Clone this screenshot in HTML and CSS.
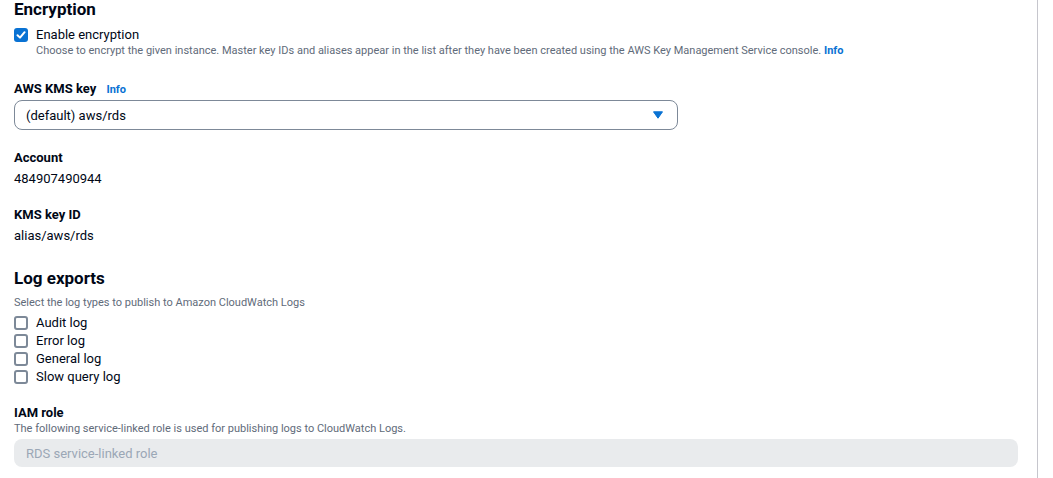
FILE: index.html
```html
<!DOCTYPE html>
<html lang="en">
<head>
<meta charset="utf-8">
<title>Encryption</title>
<link rel="stylesheet" href="styles.css">
</head>
<body>
<div class="page">
  <main class="panel">
    <h2 class="heading heading-first">Encryption</h2>
    <label class="check-row">
      <span class="box box-checked">
        <svg viewBox="0 0 14 14" width="14" height="14"><path d="M3.5 7.2 L6 9.6 L10.6 4.2" fill="none" stroke="#fff" stroke-width="2" stroke-linecap="round" stroke-linejoin="round"/></svg>
      </span>
      <span class="check-label">Enable encryption</span>
    </label>
    <p class="desc desc-indent">Choose to encrypt the given instance. Master key IDs and aliases appear in the list after they have been created using the AWS Key Management Service console. <a class="info">Info</a></p>

    <div class="field field-kms">
      <div class="label">AWS KMS key <a class="info info-label">Info</a></div>
      <div class="select">
        <span>(default) aws/rds</span>
        <svg class="caret" viewBox="0 0 10 8" width="10" height="8"><path d="M0.5 0.8 H9.5 L5 7.2 Z" fill="#0972d3" stroke="#0972d3" stroke-width="1" stroke-linejoin="round"/></svg>
      </div>
    </div>

    <div class="field field-account">
      <div class="label">Account</div>
      <div class="value">484907490944</div>
    </div>

    <div class="field field-keyid">
      <div class="label">KMS key ID</div>
      <div class="value">alias/aws/rds</div>
    </div>

    <h2 class="heading heading-log">Log exports</h2>
    <p class="desc desc-log">Select the log types to publish to Amazon CloudWatch Logs</p>
    <div class="check-list">
      <label class="check-row check-small"><span class="box"></span><span class="check-label">Audit log</span></label>
      <label class="check-row check-small"><span class="box"></span><span class="check-label">Error log</span></label>
      <label class="check-row check-small"><span class="box"></span><span class="check-label">General log</span></label>
      <label class="check-row check-small"><span class="box"></span><span class="check-label">Slow query log</span></label>
    </div>

    <div class="field field-iam">
      <div class="label label-tight">IAM role</div>
      <p class="desc">The following service-linked role is used for publishing logs to CloudWatch Logs.</p>
      <div class="input-disabled">RDS service-linked role</div>
    </div>
  </main>
  <div class="divider"></div>
</div>
</body>
</html>
```
FILE: styles.css
```css
* { box-sizing: border-box; }
html, body { margin: 0; padding: 0; background: #ffffff; }
body {
  font-family: Roboto, "Open Sans", sans-serif;
  color: #000716;
  overflow: hidden;
  height: 478px;
}
.page {
  display: flex;
  width: 1053px;
  height: 478px;
}
.panel {
  width: 1037px;
  padding: 0 19px 0 14px;
}
.divider {
  width: 1px;
  height: 478px;
  background: #c6c6cd;
}
.heading {
  margin: 0;
  font-size: 17px;
  line-height: 22px;
  font-weight: 700;
}
.heading-first { margin-top: -2px; }
.heading-log { margin-top: 21px; }
.check-row {
  display: flex;
  align-items: center;
  gap: 8px;
  height: 20px;
  margin-top: 5px;
  font-size: 13px;
}
.check-small { height: 18px; margin-top: 0; }
.check-label { line-height: 18px; }
.box {
  width: 14px;
  height: 14px;
  flex: none;
  border: 2px solid #7d8998;
  border-radius: 3px;
  background: #fff;
  display: flex;
}
.box-checked {
  border: none;
  background: #0972d3;
}
.desc {
  margin: 0;
  font-size: 11px;
  line-height: 16px;
  color: #5f6b7a;
}
.desc-indent { padding-left: 22px; margin-top: -2px; }
.desc-log { margin-top: 6px; }
.info {
  color: #0972d3;
  font-weight: 700;
  text-decoration: none;
}
.info-label { font-size: 11px; margin-left: 7px; }
.field-kms { margin-top: 20px; }
.label {
  font-size: 13px;
  line-height: 20px;
  font-weight: 700;
}
.select {
  margin-top: 0;
  width: 664px;
  height: 30px;
  border: 1px solid #7d8998;
  border-radius: 8px;
  display: flex;
  align-items: center;
  justify-content: space-between;
  padding: 0 14px 0 11px;
  font-size: 13px;
}
.caret { display: block; }
.field-account { margin-top: 18px; }
.value {
  font-size: 13px;
  line-height: 20px;
  margin-top: 1px;
}
.field-keyid { margin-top: 16px; }
.check-list {
  margin-top: 3px;
  display: flex;
  flex-direction: column;
}
.field-iam { margin-top: 18px; }
.label-tight { line-height: 17px; }
.input-disabled {
  margin-top: 2px;
  height: 28px;
  background: #e9ebed;
  border-radius: 8px;
  display: flex;
  align-items: center;
  padding-left: 12px;
  font-size: 13px;
  color: #9ba7b6;
}
```
